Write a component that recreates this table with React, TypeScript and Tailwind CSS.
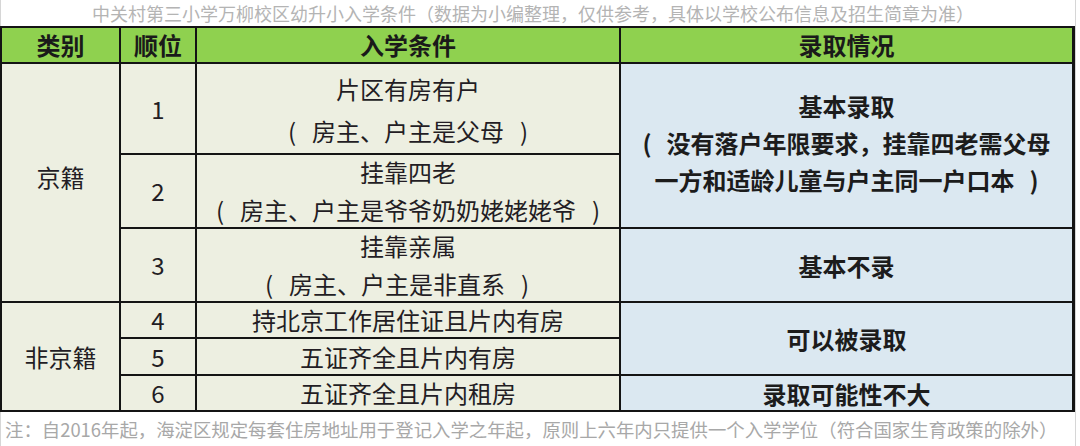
import React from "react";

const font = { fontFamily: '"Noto Sans CJK SC", "Noto Sans", sans-serif' };

function Paren({ children }: { children: React.ReactNode }) {
  return (
    <span className="whitespace-nowrap">
      <span className="inline-block w-[24px] text-left">(</span>
      {children}
      <span className="inline-block w-[24px] text-right">)</span>
    </span>
  );
}

export default function App() {
  const cellL = "bg-[#edefe1] flex flex-col items-center justify-center text-[24px] text-[#231d24]";
  const cellR = "bg-[#dbe8f1] flex flex-col items-center justify-center text-[24px] font-bold text-[#1c1c1c] leading-[37px]";
  const head = "bg-[#8fd14f] flex items-center justify-center text-[24px] font-bold text-[#1a1a1a]";
  return (
    <div className="w-[1080px] h-[446px] bg-white overflow-hidden" style={font}>
      <div className="w-[1076px] border-r border-[#d6d6d6] flex flex-col">
        <div className="h-[26px] flex items-center justify-center pr-[10px] text-[18px] text-[#b4b4b4] border-l border-[#d6d6d6] leading-none">
          中关村第三小学万柳校区幼升小入学条件（数据为小编整理，仅供参考，具体以学校公布信息及招生简章为准）
        </div>
        <div className="w-[1075px] grid grid-cols-[117px_74px_422px_451px] grid-rows-[34px_89px_72px_72px_34px_35px_34px] gap-[2px] p-[2px] bg-[#141414]">
          <div className={head}>类别</div>
          <div className={head}>顺位</div>
          <div className={head}>入学条件</div>
          <div className={head}>录取情况</div>

          <div className={`${cellL} row-span-3 pb-[12px]`}>京籍</div>
          <div className={cellL}>1</div>
          <div className={`${cellL} leading-[42px] pt-[2px]`}>
            <span>片区有房有户</span>
            <Paren>房主、户主是父母</Paren>
          </div>
          <div className={`${cellR} row-span-2 pb-[6px]`}>
            <span>基本录取</span>
            <span className="whitespace-nowrap">
              <span className="inline-block w-[24px] text-left">(</span>没有落户年限要求，挂靠四老需父母
            </span>
            <span className="whitespace-nowrap">
              一方和适龄儿童与户主同一户口本<span className="inline-block w-[24px] text-right">)</span>
            </span>
          </div>

          <div className={cellL}>2</div>
          <div className={`${cellL} leading-[38px]`}>
            <span>挂靠四老</span>
            <Paren>房主、户主是爷爷奶奶姥姥姥爷</Paren>
          </div>

          <div className={cellL}>3</div>
          <div className={`${cellL} leading-[38px]`}>
            <span>挂靠亲属</span>
            <span className="pr-[22px]">
              <Paren>房主、户主是非直系</Paren>
            </span>
          </div>
          <div className={cellR}>基本不录</div>

          <div className={`${cellL} row-span-3`}>非京籍</div>
          <div className={cellL}>4</div>
          <div className={cellL}>持北京工作居住证且片内有房</div>
          <div className={`${cellR} row-span-2`}>可以被录取</div>

          <div className={cellL}>5</div>
          <div className={cellL}>五证齐全且片内有房</div>

          <div className={cellL}>6</div>
          <div className={cellL}>五证齐全且片内租房</div>
          <div className={cellR}>录取可能性不大</div>
        </div>
        <div className="h-[34px] flex items-center pl-[4px] text-[18.4px] text-[#a8a8a8] border-l border-[#d6d6d6] leading-none whitespace-nowrap">
          注：自2016年起，海淀区规定每套住房地址用于登记入学之年起，原则上六年内只提供一个入学学位（符合国家生育政策的除外）
        </div>
      </div>
    </div>
  );
}
